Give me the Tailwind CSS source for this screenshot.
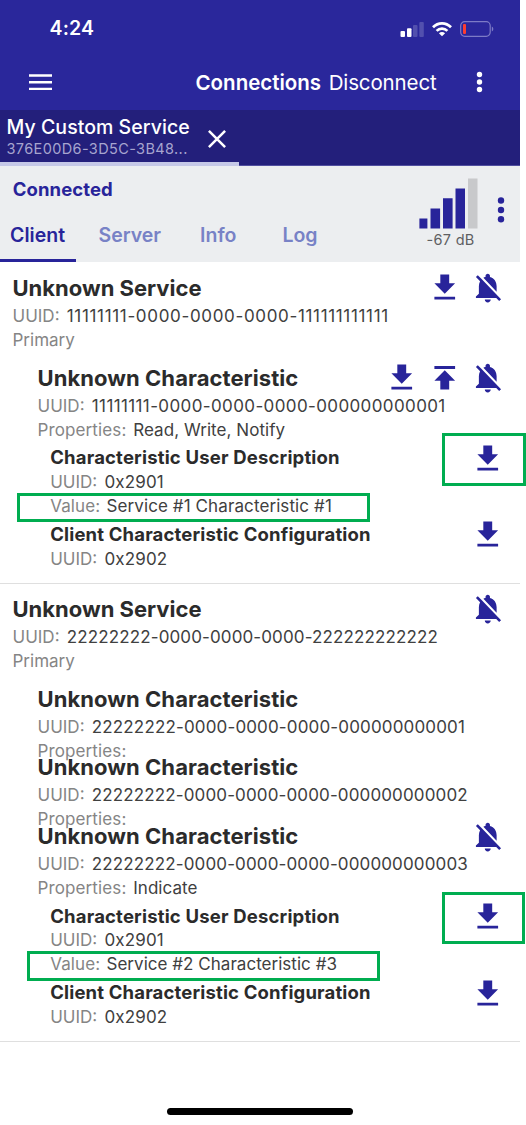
<!DOCTYPE html>
<html lang="en">
<head>
<meta charset="utf-8">
<title>Connections</title>
<script src="https://cdn.jsdelivr.net/npm/@tailwindcss/browser@4"></script>
</head>
<body class="bg-white font-['Inter','Liberation_Sans',sans-serif] text-[17px] text-[#404040]">
<svg class="hidden">
  <symbol id="download" viewBox="0 0 24 24"><path d="M19 9h-4V3H9v6H5l7 7 7-7zM5 18v2h14v-2H5z"/></symbol>
  <symbol id="upload" viewBox="0 0 24 24"><path d="M5 4v2h14V4H5zm0 10h4v6h6v-6h4l-7-7-7 7z"/></symbol>
  <symbol id="bell-off" viewBox="0 0 24 24"><path d="M20 18.69L7.84 6.14 5.27 3.49 4 4.76l2.8 2.8v.01c-.52.99-.8 2.16-.8 3.42v5l-2 2v1h13.73l2 2L21 19.72l-1-1.03zM12 22c1.11 0 2-.89 2-2h-4c0 1.11.89 2 2 2zm6-7.32V11c0-3.08-1.64-5.64-4.5-6.32V4c0-.83-.67-1.5-1.5-1.5s-1.5.67-1.5 1.5v.68c-.15.03-.29.08-.42.12-.1.03-.2.07-.3.11h-.01c-.01 0-.01 0-.02.01-.23.09-.46.2-.68.31 0 0-.01 0-.01.01L18 14.68z"/></symbol>
</svg>
<div class="relative h-[1125px] w-[526px] overflow-hidden whitespace-nowrap">
  <div class="flex h-full w-[520px] flex-col">

    <header class="h-[110px] shrink-0 bg-[#2a279b] text-white">
      <div class="flex h-[57px] items-center pl-[49.5px] pr-[26px]">
        <span class="pt-px text-[19.5px] font-semibold tracking-[0.15px]">4:24</span>
        <svg class="ml-auto h-4 w-6" viewBox="0 0 24 16"><g fill="#fff"><rect x="0.5" y="10" width="4.5" height="6" rx="1"/><rect x="7" y="7.3" width="4.5" height="8.7" rx="1"/></g><g fill="#5250ae"><rect x="13" y="4" width="4.5" height="12" rx="1"/><rect x="19.3" y="1" width="4.5" height="15" rx="1"/></g></svg>
        <svg class="ml-2 h-4 w-5" viewBox="0 0 20 16" fill="none" stroke="#fff" stroke-width="2.7"><path d="M1 6.3C6 1 14 1 19 6.3"/><path d="M4.6 9.9c3-3 7.800-3 10.800 0"/><path d="M10 15.300L6.900 12.200c1.800-1.500 4.400-1.500 6.200 0z" fill="#fff" stroke="none"/></svg>
        <svg class="ml-2 h-4 w-[34px]" viewBox="0 0 34 16"><rect x="0.700" y="0.700" width="29.500" height="14.600" rx="4" fill="none" stroke="#7d7bc6" stroke-width="1.200"/><path d="M31.800 5.500c2 .8 2 4.200 0 5z" fill="#7d7bc6"/><rect x="3" y="3" width="3" height="10" rx="1" fill="#fc3d30"/></svg>
      </div>
      <div class="flex h-[50.5px] items-center pl-[29px] pr-[33px]">
        <svg class="h-4 w-[23px]" viewBox="0 0 23 16" fill="#fff"><path d="M0 .2h23v2.500H0zM0 7h23v2.500H0zM0 13.800h23v2.500H0z"/></svg>
        <span class="ml-[143.500px] pt-[2px] text-[20.5px] font-semibold">Connections</span>
        <span class="ml-[7.500px] pt-[2px] text-[20.5px] tracking-[-0.12px]">Disconnect</span>
        <svg class="ml-auto h-[22px] w-[15px]" viewBox="0 0 15 22" fill="#fff"><circle cx="7.500" cy="3.500" r="2.700"/><circle cx="7.500" cy="11" r="2.700"/><circle cx="7.500" cy="18.500" r="2.700"/></svg>
      </div>
    </header>

    <div class="flex h-14 shrink-0 border-b border-[#514fa0] bg-[#231f7b]">
      <div class="z-10 flex h-14 w-[239px] border-b-4 border-[#c5c8e7] pl-[6.500px] text-white">
        <div class="w-[201px] pt-[4px]">
          <div class="h-[26px] text-[19.5px] font-medium leading-[26px] tracking-[0.05px]">My Custom Service</div>
          <div class="h-[18px] text-[14.5px] leading-[18px] tracking-[0.38px] text-[#a7a5cf]">376E00D6-3D5C-3B48...</div>
        </div>
        <svg class="mt-5 h-[18px] w-[18px]" viewBox="0 0 18 18" fill="none" stroke="#fff" stroke-width="2.500"><path d="M.9 .9l16.200 16.200M17.100 .9L.9 17.100"/></svg>
      </div>
    </div>

    <div class="flex h-24 shrink-0 bg-[#eceef0] text-[#28249a]">
      <div class="flex w-[419px] flex-col">
        <div class="h-12 pl-[12.7px] text-[18.5px] font-bold leading-[46px] tracking-[0.1px]">Connected</div>
        <nav class="flex h-12 text-[19.5px] font-semibold leading-[42px] text-[#7882c6]">
          <span class="w-[76px] border-b-[3.5px] border-[#28249a] pl-[10px] tracking-[0.05px] text-[#28249a]">Client</span>
          <span class="w-[123px] pl-[22.500px]">Server</span>
          <span class="w-[83.500px] pl-px tracking-[0.05px]">Info</span>
          <span class="tracking-[-0.1px]">Log</span>
        </nav>
      </div>
      <div class="w-[59px] pt-[12px]">
        <svg class="h-[51px] w-[59px]" viewBox="0 0 59 51" fill="#28249a"><path d="M.4 40.500h8v10h-8zM11.500 30.500h9.600v20h-9.600zM24 20.300h9.600v30.200H24zM36.500 10.500H46v40h-9.500z"/><path fill="#c8c9cb" d="M49 .5h9.500v50H49z"/></svg>
        <div class="pl-[7.500px] text-[14.5px] leading-[22px] tracking-[0.3px] text-[#5e5f62]">-67 dB</div>
      </div>
      <svg class="ml-[15px] mt-[31px] h-[26px] w-4" viewBox="0 0 16 26" fill="#28249a"><circle cx="8" cy="3.500" r="3.200"/><circle cx="8" cy="13" r="3.200"/><circle cx="8" cy="22.300" r="3.200"/></svg>
    </div>

    <main class="fill-[#28249a]">
      <section class="h-[321.5px] border-b border-[#dfdfdf] pl-[12.5px] pr-[15px] pt-[11px]">
        <div class="flex h-[30px] items-center justify-between"><h2 class="text-[22px] font-bold text-[#2b2b2b]">Unknown Service</h2>
          <div class="flex gap-[7.2px]"><svg class="size-[35.5px]"><use href="#download"/></svg><svg class="size-[35.5px]"><use href="#bell-off"/></svg></div></div>
        <div class="flex h-6 items-center pt-[3px]"><span class="w-[54.3px] text-[#858585]">UUID:</span><span class="tracking-[0.66px]">11111111-0000-0000-0000-111111111111</span></div>
        <div class="flex h-6 items-center pt-[3px] text-[#858585]">Primary</div>

        <div class="mt-3 pl-[25px]">
          <div class="flex h-[30px] items-center justify-between"><h3 class="text-[22px] font-bold tracking-[0.06px] text-[#2b2b2b]">Unknown Characteristic</h3>
            <div class="flex gap-[7.2px]"><svg class="size-[35.5px]"><use href="#download"/></svg><svg class="size-[35.5px]"><use href="#upload"/></svg><svg class="size-[35.5px]"><use href="#bell-off"/></svg></div></div>
          <div class="flex h-6 items-center pt-[3px]"><span class="w-[54.3px] text-[#858585]">UUID:</span><span class="tracking-[0.38px]">11111111-0000-0000-0000-000000000001</span></div>
          <div class="flex h-6 items-center pt-[3px]"><span class="w-[95.7px] tracking-[0.12px] text-[#858585]">Properties:</span><span class="tracking-[0.06px]">Read, Write, Notify</span></div>
          <div class="pl-[12.7px]">
            <div class="mt-[4.5px] flex h-6 items-center justify-between"><h4 class="pt-px text-[18.5px] font-bold tracking-[0.18px] text-[#2b2b2b]">Characteristic User Description</h4><svg class="mt-[2px] size-[35.5px]"><use href="#download"/></svg></div>
            <div class="flex h-6 items-center pt-[3px]"><span class="w-[54.3px] text-[#858585]">UUID:</span><span class="tracking-[0.15px]">0x2901</span></div>
            <div class="flex h-6 items-center pt-[3px]"><span class="w-[56.300px] tracking-[0.1px] text-[#858585]">Value:</span><span class="tracking-[0.1px]">Service #1 Characteristic #1</span></div>
            <div class="mt-[4.5px] flex h-6 items-center justify-between"><h4 class="pt-px text-[18.5px] font-bold tracking-[0.16px] text-[#2b2b2b]">Client Characteristic Configuration</h4><svg class="mt-[2px] size-[35.5px]"><use href="#download"/></svg></div>
            <div class="flex h-6 items-center pt-[3px]"><span class="w-[54.3px] text-[#858585]">UUID:</span><span class="tracking-[0.15px]">0x2902</span></div>
          </div>
        </div>
      </section>

      <section class="h-[458px] border-b border-[#dfdfdf] pl-[12.5px] pr-[15px] pt-[10.500px]">
        <div class="flex h-[30px] items-center justify-between"><h2 class="text-[22px] font-bold text-[#2b2b2b]">Unknown Service</h2><svg class="size-[35.5px]"><use href="#bell-off"/></svg></div>
        <div class="flex h-6 items-center pt-[2.5px]"><span class="w-[54.3px] text-[#858585]">UUID:</span><span class="tracking-[0.12px]">22222222-0000-0000-0000-222222222222</span></div>
        <div class="flex h-6 items-center pt-[2.5px] text-[#858585]">Primary</div>

        <div class="mt-3 pl-[25px]">
          <h3 class="flex h-[30px] items-center text-[22px] font-bold tracking-[0.06px] text-[#2b2b2b]">Unknown Characteristic</h3>
          <div class="flex h-6 items-center pt-[2.5px]"><span class="w-[54.3px] text-[#858585]">UUID:</span><span class="tracking-[0.15px]">22222222-0000-0000-0000-000000000001</span></div>
          <div class="flex h-6 items-center pt-[2.5px] tracking-[0.12px] text-[#858585]">Properties:</div>
        </div>
        <div class="-mt-[9.300px] pl-[25px]">
          <h3 class="flex h-[30px] items-center text-[22px] font-bold tracking-[0.06px] text-[#2b2b2b]">Unknown Characteristic</h3>
          <div class="flex h-6 items-center pt-[2.5px]"><span class="w-[54.3px] text-[#858585]">UUID:</span><span class="tracking-[0.13px]">22222222-0000-0000-0000-000000000002</span></div>
          <div class="flex h-6 items-center pt-[2.5px] tracking-[0.12px] text-[#858585]">Properties:</div>
        </div>
        <div class="-mt-[9.300px] pl-[25px]">
          <div class="flex h-[30px] items-center justify-between"><h3 class="text-[22px] font-bold tracking-[0.06px] text-[#2b2b2b]">Unknown Characteristic</h3><svg class="size-[35.5px]"><use href="#bell-off"/></svg></div>
          <div class="flex h-6 items-center pt-[2px]"><span class="w-[54.3px] text-[#858585]">UUID:</span><span class="tracking-[0.13px]">22222222-0000-0000-0000-000000000003</span></div>
          <div class="flex h-6 items-center pt-[2px]"><span class="w-[95.7px] tracking-[0.12px] text-[#858585]">Properties:</span><span class="tracking-[0.05px]">Indicate</span></div>
          <div class="pl-[12.7px]">
            <div class="mt-[4.5px] flex h-6 items-center justify-between"><h4 class="pt-px text-[18.5px] font-bold tracking-[0.18px] text-[#2b2b2b]">Characteristic User Description</h4><svg class="mt-[2px] size-[35.5px]"><use href="#download"/></svg></div>
            <div class="flex h-6 items-center pt-[2px]"><span class="w-[54.3px] text-[#858585]">UUID:</span><span class="tracking-[0.15px]">0x2901</span></div>
            <div class="flex h-6 items-center pt-[2px]"><span class="w-[56.300px] tracking-[0.1px] text-[#858585]">Value:</span><span class="tracking-[0.03px]">Service #2 Characteristic #3</span></div>
            <div class="mt-[4.5px] flex h-6 items-center justify-between"><h4 class="pt-px text-[18.5px] font-bold tracking-[0.16px] text-[#2b2b2b]">Client Characteristic Configuration</h4><svg class="mt-[2px] size-[35.5px]"><use href="#download"/></svg></div>
            <div class="flex h-6 items-center pt-[2px]"><span class="w-[54.3px] text-[#858585]">UUID:</span><span class="tracking-[0.15px]">0x2902</span></div>
          </div>
        </div>
      </section>
    </main>
    <div class="mx-auto mt-[66.5px] h-[6.500px] w-[186px] shrink-0 rounded-full bg-black"></div>
  </div>

  <!-- highlight frames -->
  <div class="absolute left-[442px] top-[433px] h-[53px] w-[84px] border-3 border-[#00ad50]"></div>
  <div class="absolute left-[17px] top-[493px] h-[29px] w-[353px] border-3 border-[#00ad50]"></div>
  <div class="absolute left-[442px] top-[892px] h-[52px] w-[83px] border-3 border-[#00ad50]"></div>
  <div class="absolute left-[27px] top-[951px] h-[30px] w-[353px] border-3 border-[#00ad50]"></div>
</div>
</body>
</html>
